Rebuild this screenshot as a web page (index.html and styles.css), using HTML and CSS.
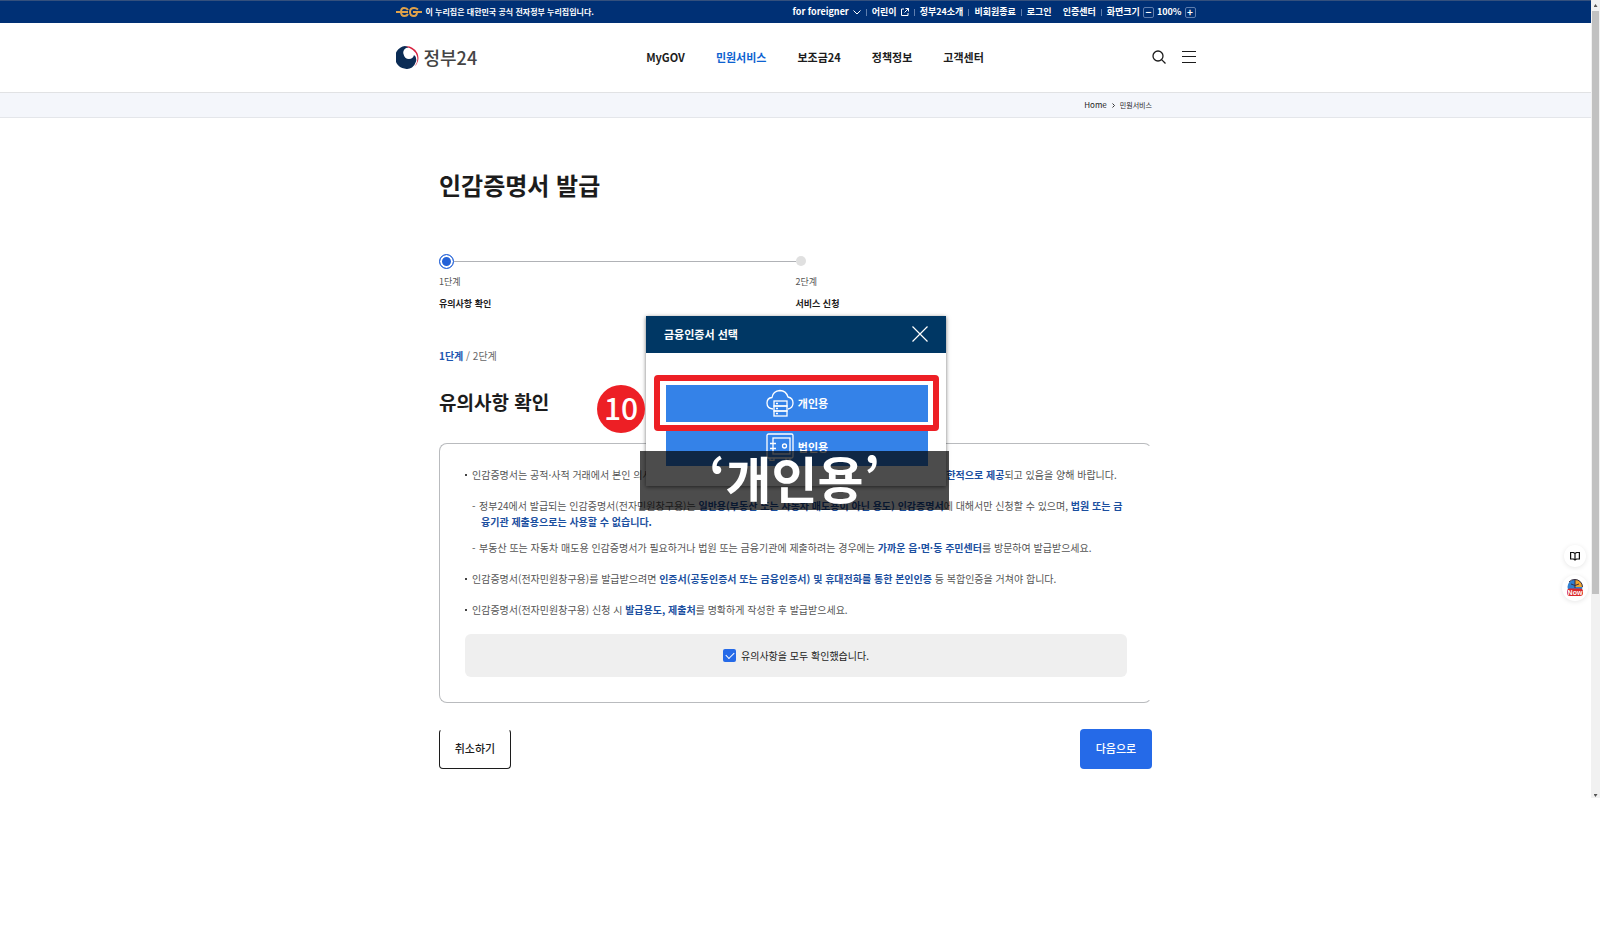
FILE: index.html
```html
<!DOCTYPE html>
<html lang="ko">
<head>
<meta charset="utf-8">
<title>인감증명서 발급 | 정부24</title>
<link rel="stylesheet" href="styles.css">
</head>
<body>
<div class="screen">
  <div class="page">
    <div class="topbar">
      <div class="wide topbar-row">
        <p class="official">
          <svg class="eg" viewBox="0 0 26 10" width="26" height="10" fill="none" stroke="#e0a24a" stroke-width="2" aria-hidden="true"><path d="M0 5H12M12 3Q11 1 8 1Q5 1 5 5Q5 9 8.500 9Q11 9 12 7M22 2.500Q20 1 18 1Q14 1 14 5Q14 9 18 9Q21 9 21 5H26M17 5H21"/></svg>
          <span>이 누리집은 대한민국 공식 전자정부 누리집입니다.</span>
        </p>
        <ul class="utils">
          <li><a href="#">for foreigner <svg width="8" height="5" viewBox="0 0 8 5" fill="none" stroke="#fff"><path d="M.5.5 4 4 7.500.5"/></svg></a></li>
          <li><a href="#">어린이 <svg width="8" height="8" viewBox="0 0 8 8" fill="none" stroke="#fff"><path d="M3 1H.5V7.500H7V5M4.500.5H7.500V3.500M7.500.5 3.500 4.500"/></svg></a></li>
          <li><a href="#">정부24소개</a></li>
          <li><a href="#">비회원종료</a></li>
          <li><a href="#">로그인</a></li>
          <li class="plain"><a href="#">인증센터</a></li>
          <li class="zoom"><span>화면크기</span><button class="step-btn" aria-label="축소">−</button><span>100%</span><button class="step-btn" aria-label="확대">+</button></li>
        </ul>
      </div>
    </div>

    <header class="header">
      <div class="wide header-row">
        <a class="logo" href="#">
          <svg width="24" height="24" viewBox="0 0 24 24" aria-hidden="true"><path d="M9 1.500A11.500 11.500 0 0 1 18.500 21.500Q22.500 17 21 11Q19 4 9 1.500Z" fill="#d8223f"/><path d="M12.500 2.500A5 5 0 0 0 7.500 9Q8.500 14 13 14Q17 14 18 10Q21 12 20 16.500Q18.500 21 16 22.500A11.500 11.500 0 1 1 9 1Q11.500 1.500 12.500 2.500Z" fill="#0b2c55"/></svg>
          <span>정부24</span>
        </a>
        <nav class="nav">
          <a href="#">MyGOV</a><a class="current" href="#">민원서비스</a><a href="#">보조금24</a><a href="#">정책정보</a><a href="#">고객센터</a>
        </nav>
        <div class="tools">
          <button aria-label="검색"><svg width="14" height="14" viewBox="0 0 14 14" fill="none" stroke="#1c1c1c" stroke-width="1.300"><circle cx="6" cy="6" r="5"/><path d="M9.600 9.600 13.500 13.500"/></svg></button>
          <button aria-label="전체메뉴"><svg width="14" height="12" viewBox="0 0 14 12" stroke="#1c1c1c"><path d="M0 .5H14M0 5.500H14M0 11.500H14"/></svg></button>
        </div>
      </div>
    </header>

    <div class="crumbs">
      <div class="narrow crumbs-row"><a href="#">Home</a><svg width="3" height="5" viewBox="0 0 3 5" fill="none" stroke="#333"><path d="M.5.5 2.500 2.500.5 4.500"/></svg><span>민원서비스</span></div>
    </div>

    <main class="narrow main">
      <h1>인감증명서 발급</h1>
      <ol class="steps">
        <li class="on"><i class="dot"></i><span>1단계</span><strong>유의사항 확인</strong></li>
        <li><i class="dot"></i><span>2단계</span><strong>서비스 신청</strong></li>
      </ol>
      <p class="progress"><b>1단계</b> / 2단계</p>
      <h2>유의사항 확인</h2>

      <section class="notice">
        <ul class="notes">
          <li>인감증명서는 공적·사적 거래에서 본인 의사를 확인하는 중요한 서류이므로 온라인 발급 신청은 일부 용도에 한해 <b>제한적으로 제공</b>되고 있음을 양해 바랍니다.
            <ul>
              <li>정부24에서 발급되는 인감증명서(전자민원창구용)는 <b>일반용(부동산 또는 자동차 매도용이 아닌 용도) 인감증명서</b>에 대해서만 신청할 수 있으며, <b>법원 또는 금융기관 제출용으로는 사용할 수 없습니다.</b></li>
              <li>부동산 또는 자동차 매도용 인감증명서가 필요하거나 법원 또는 금융기관에 제출하려는 경우에는 <b>가까운 읍·면·동 주민센터</b>를 방문하여 발급받으세요.</li>
            </ul>
          </li>
          <li>인감증명서(전자민원창구용)를 발급받으려면 <b>인증서(공동인증서 또는 금융인증서) 및 휴대전화를 통한 본인인증</b> 등 복합인증을 거쳐야 합니다.</li>
          <li>인감증명서(전자민원창구용) 신청 시 <b>발급용도, 제출처</b>를 명확하게 작성한 후 발급받으세요.</li>
        </ul>
        <label class="agree"><input type="checkbox" checked> 유의사항을 모두 확인했습니다.</label>
      </section>

      <div class="actions"><button class="btn cancel">취소하기</button><button class="btn next">다음으로</button></div>

      <div class="modal" role="dialog" aria-labelledby="modal-title">
        <div class="modal-head"><strong id="modal-title">금융인증서 선택</strong>
          <button aria-label="닫기"><svg width="16" height="16" viewBox="0 0 16 16" stroke="#fff" stroke-width="1.200"><path d="M.5.5 15.500 15.500M15.500.5.5 15.500"/></svg></button>
        </div>
        <div class="modal-body">
          <button class="choice"><svg width="28" height="28" viewBox="0 0 28 28" fill="none" stroke="#fff" stroke-width="1.300"><path d="M7 20Q1 19.500 1 14Q1 9 6 8.500Q7 2 14 1.500Q20 1.500 22 8Q27 9 27 14Q27 19 22 20"/><rect x="8" y="12" width="13" height="5"/><rect x="8" y="17" width="13" height="5"/><rect x="8" y="22" width="13" height="5"/><path d="M10 14.500H12M10 19.500H12M10 24.500H12"/></svg>개인용</button>
          <button class="choice"><svg width="28" height="28" viewBox="0 0 28 28" fill="none" stroke="#fff" stroke-width="1.300"><rect x="1" y="1" width="26" height="24" rx="1.500"/><rect x="7" y="5" width="17" height="16"/><circle cx="18.500" cy="13" r="2"/><path d="M4 10.500H10M4 15.500H10M4 25V27.500H8V25M20 25V27.500H24V25"/></svg>법인용</button>
        </div>
      </div>
      <div class="highlight"></div>
      <div class="badge">10</div>
      <div class="caption">‘개인용’</div>
    </main>

    <div class="floats">
      <button aria-label="안내"><svg width="10" height="10" viewBox="0 0 10 10" fill="none" stroke="#111" stroke-width="1.200"><path d="M.6 1.500H3.500L5 2.500 6.500 1.500H9.400V8H6.500L5 9 3.500 8H.6ZM5 2.500V9"/></svg></button>
      <button class="now" aria-label="Now"><svg width="18" height="18" viewBox="0 0 18 18"><circle cx="9" cy="8" r="7.500" fill="#2f7fd0"/><path d="M9 8V.5A7.500 7.500 0 0 1 16.500 8Z" fill="#f0a52c"/><path d="M9 .5A7.500 7.500 0 0 1 16.500 8M3 3A7.500 7.500 0 0 1 9 .5M9 1V9M5 5Q9 8 13 5" fill="none" stroke="#3a3040"/><rect x="1" y="9.500" width="16" height="7.500" rx="3" fill="#d9282c"/><text class="now-text" x="9" y="16" text-anchor="middle">Now</text></svg></button>
    </div>
  </div>
  <div class="scrollbar"><span class="up"></span><span class="thumb"></span><span class="down"></span></div>
</div>
</body>
</html>
```
FILE: styles.css
```css
* { box-sizing: border-box; margin: 0; padding: 0; }
body { background: #fff; color: #1c1c1c; font: 10px/16px "Noto Sans CJK KR", "Noto Sans", sans-serif; }
ul, ol { list-style: none; }
a { color: inherit; text-decoration: none; }
button { font: inherit; color: inherit; background: none; border: 0; cursor: pointer; }
svg { display: block; flex: none; }

.screen { display: flex; }
.page { flex: 1; position: relative; min-width: 0; }
.wide { max-width: 800px; margin: 0 auto; }
.narrow { max-width: 713px; margin: 0 auto; }

.topbar { background: #003075; border-top: 1px solid #34507d; color: #fff; font-weight: 700; font-size: 9px; }
.topbar-row { display: flex; align-items: center; justify-content: space-between; height: 22px; }
.official { display: flex; align-items: center; gap: 4px; font-size: 8px; }
.utils { display: flex; align-items: center; }
.utils li { display: flex; align-items: center; line-height: 12px; }
.utils li + li::before { content: ""; width: 1px; height: 7px; margin: 0 5px; background: #5f7eae; }
.utils li.plain::before { background: none; }
.utils a { display: flex; align-items: center; gap: 4px; }
.zoom { gap: 3px; }
.utils li.zoom::before { margin-right: 2px; }
.step-btn { width: 11px; height: 11px; border: 1px solid #5f7eae; border-radius: 2px; font-size: 10px; line-height: 8px; }

.header { border-bottom: 1px solid #e1e2e4; }
.header-row { display: flex; align-items: center; height: 69px; padding-bottom: 2px; }
.logo { display: flex; align-items: center; gap: 4px; font-size: 18px; font-weight: 500; line-height: 24px; color: #444; }
.nav { display: flex; gap: 31px; margin-left: 169px; font-size: 11px; font-weight: 700; }
.nav .current { color: #0d62d0; }
.tools { display: flex; align-items: center; gap: 16px; margin-left: auto; }

.crumbs { background: #f4f6fb; border-bottom: 1px solid #e4e6ea; }
.crumbs-row { display: flex; align-items: center; justify-content: flex-end; gap: 5px; height: 24px; font-size: 8px; }
.crumbs-row span { font-size: 7px; }

.main { position: relative; padding: 49px 0 29px; }
h1 { font-size: 24px; line-height: 36px; }
.steps { display: grid; grid-template-columns: 1fr 1fr; margin-top: 51px; font-size: 9px; }
.steps li { position: relative; display: flex; flex-direction: column; color: #555; }
.steps span { margin-top: 6px; }
.steps strong { margin-top: 6px; color: #1c1c1c; }
.dot { width: 12px; height: 14px; display: flex; align-items: center; }
.dot::before { content: ""; width: 10px; height: 10px; border-radius: 50%; background: #e0e0e0; }
.on .dot { width: auto; }
.on .dot::before { width: 13px; height: 13px; border: 1px solid #2563d8; background: #2563d8; box-shadow: inset 0 0 0 2px #fff; }
.on .dot::after { content: ""; flex: 1; height: 1px; background: #b0b2b6; }
.progress { margin-top: 36px; color: #666; }
.progress b { color: #1d56b0; }
h2 { margin-top: 23px; font-size: 19px; line-height: 30px; }

.notice { margin-top: 26px; padding: 23px 24px 25px 25px; border: 1px solid #b9bbbe; border-right-color: transparent; border-radius: 8px; }
.notes { color: #555; }
.notes li { position: relative; padding-left: 7px; }
.notes > li + li { margin-top: 15px; }
.notes > li::before { content: ""; position: absolute; left: 0; top: 7px; width: 2px; height: 2px; background: #444; }
.notes ul { margin-top: 15px; }
.notes ul li { padding-left: 9px; text-indent: -2px; }
.notes ul li + li { margin-top: 10px; }
.notes ul li::before { content: "-"; position: absolute; left: 2px; }
.notes b { color: #1b4f9f; }
.agree { display: flex; align-items: center; justify-content: center; gap: 5px; height: 43px; margin-top: 16px; border-radius: 6px; background: #efefef; }
.agree input { appearance: none; display: grid; place-items: center; width: 13px; height: 13px; border-radius: 2px; background: #256ae8; }
.agree input:checked::after { content: ""; width: 7px; height: 4px; margin-bottom: 2px; border: solid #fff; border-width: 0 0 1px 1px; transform: rotate(-45deg); }

.actions { display: flex; justify-content: space-between; margin-top: 26px; }
.btn { height: 40px; padding: 0 14px 2px; border-radius: 4px; font-size: 11px; font-weight: 500; min-width: 72px; }
.cancel { border: 1px solid #1c1c1c; border-top-color: transparent; }
.next { background: #256ae8; color: #fff; }

.modal { position: absolute; left: 207px; top: 198px; width: 300px; background: #fff; box-shadow: 0 1px 4px rgba(0, 0, 0, .55); }
.modal-head { display: flex; align-items: center; justify-content: space-between; height: 37px; padding: 0 18px 1px; background: #003764; color: #fff; font-size: 11px; }
.modal-body { display: grid; gap: 7px; padding: 32px 18px 20px 20px; }
.choice { display: flex; align-items: center; justify-content: center; gap: 4px; height: 37px; padding-bottom: 2px; background: #3482e8; color: #fff; font-size: 11px; font-weight: 700; }
.highlight { position: absolute; left: 215px; top: 257px; width: 285px; height: 56px; border: 6px solid #ed1f25; border-radius: 4px; }
.badge { position: absolute; left: 158px; top: 267px; width: 48px; height: 48px; border-radius: 50%; background: #ed1f25; color: #fff; font-size: 30px; font-weight: 500; line-height: 44px; text-align: center; }
.caption { position: absolute; left: 201px; top: 333px; width: 309px; height: 59px; background: rgba(0, 0, 0, .7); color: #fff; font-size: 50px; font-weight: 700; line-height: 52px; text-align: center; }

.floats { position: absolute; right: 3px; top: 545px; display: grid; gap: 8px; justify-items: center; }
.floats button { display: grid; place-items: center; width: 22px; height: 22px; border-radius: 50%; background: #fff; box-shadow: 0 1px 5px rgba(0, 0, 0, .1); }
.floats .now { width: 26px; height: 26px; }
.now-text { fill: #fff; font: 700 7px "Liberation Sans", sans-serif; }

.scrollbar { display: flex; flex-direction: column; align-items: center; width: 9px; background: #f1f1f1; }
.up, .down { width: 4px; height: 3px; background: #555; clip-path: polygon(50% 0, 100% 100%, 0 100%); margin: 4px 0; }
.down { clip-path: polygon(0 0, 100% 0, 50% 100%); margin-top: auto; margin-bottom: 1px; }
.thumb { width: 7px; height: 73%; background: #c1c1c1; }
```
